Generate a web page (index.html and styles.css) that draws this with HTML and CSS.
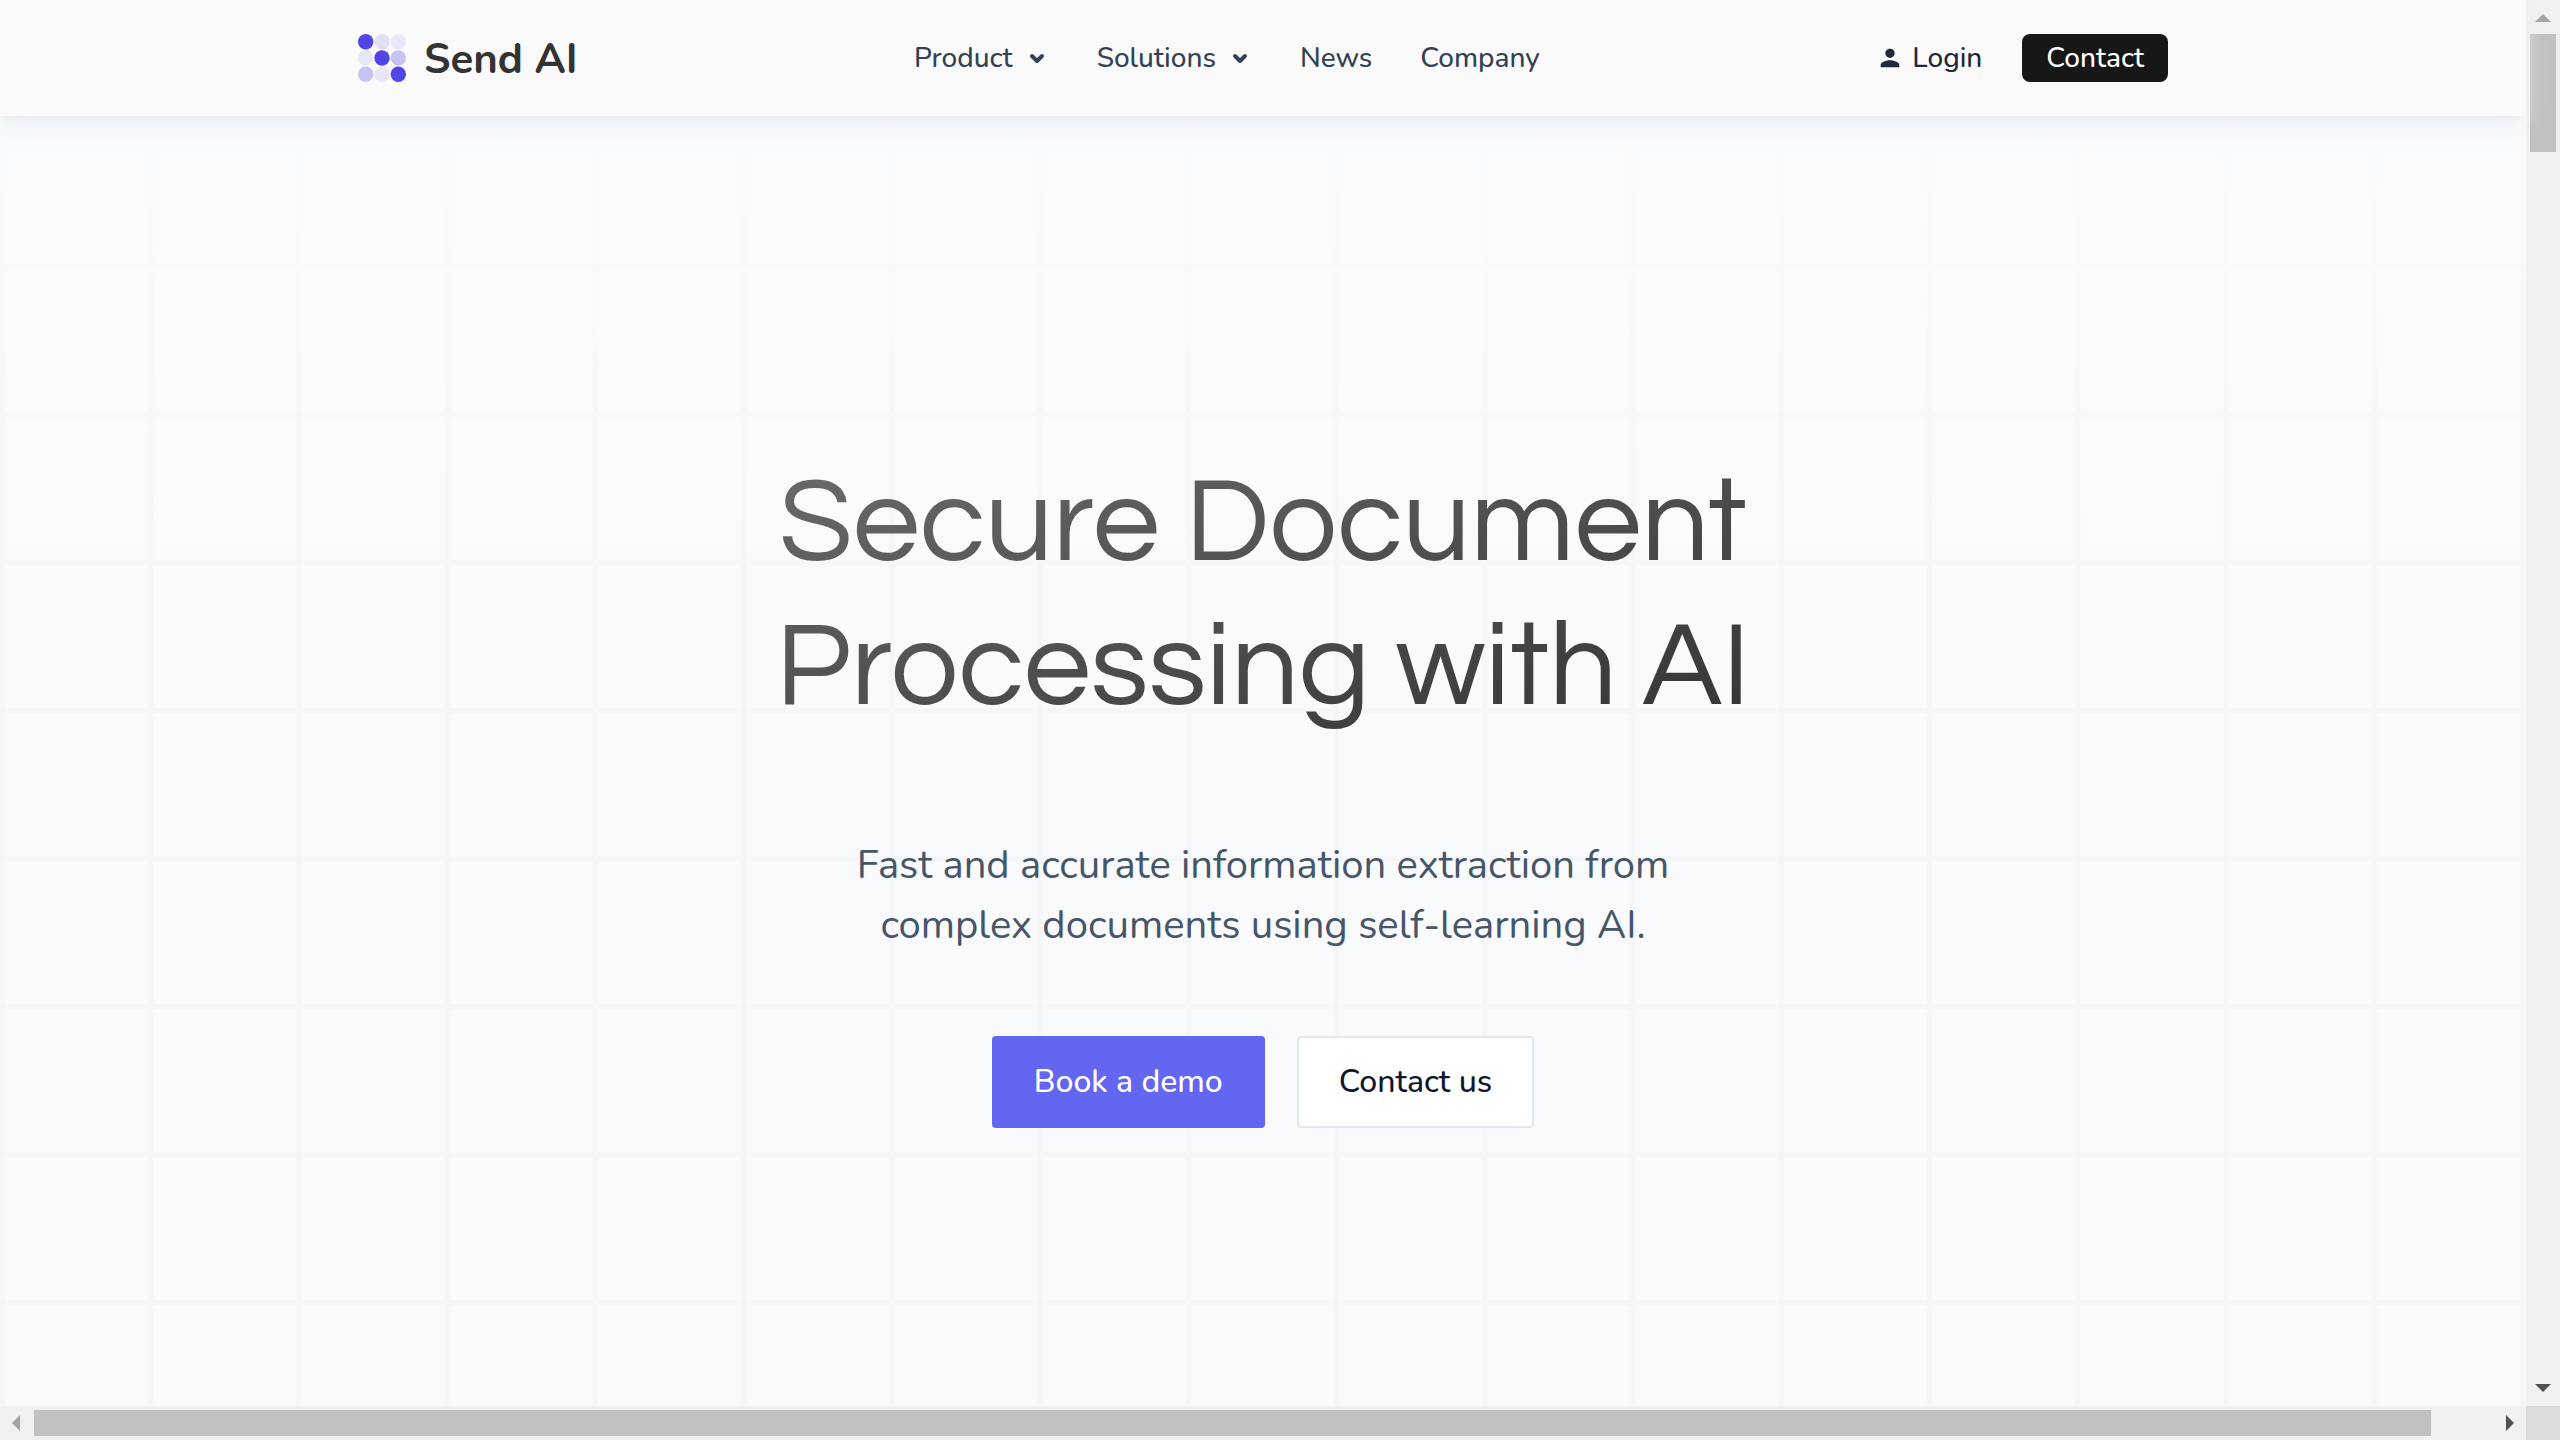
FILE: index.html
```html
<!DOCTYPE html>
<html lang="en">
<head>
  <meta charset="utf-8">
  <meta name="viewport" content="width=device-width, initial-scale=1">
  <title>Send AI</title>
  <link rel="stylesheet" href="styles.css">
</head>
<body>
  <div class="frame">
    <div class="page">
      <header class="header">
        <div class="header-inner">
          <a class="brand" href="#">
            <svg class="brand-mark" viewBox="0 0 48 48" aria-hidden="true">
              <g fill="#4f46e5"><circle cx="7.7" cy="7.7" r="7.7"/><circle cx="24" cy="24" r="7.7"/><circle cx="40.3" cy="40.3" r="7.7"/></g>
              <g fill="#c7c4f3"><circle cx="40.3" cy="24" r="7.7"/><circle cx="7.7" cy="40.3" r="7.7"/></g>
              <g fill="#e8e7f8"><circle cx="40.3" cy="7.7" r="7.7"/><circle cx="7.7" cy="24" r="7.7"/><circle cx="24" cy="40.3" r="7.7"/></g>
              <circle cx="24" cy="7.7" r="7.7" fill="#e1dff6"/>
            </svg>
            <span class="brand-name">Send AI</span>
          </a>
          <nav class="nav">
            <button class="nav-item" type="button">Product
              <svg class="chevron" viewBox="0 0 24 24" aria-hidden="true"><path d="M7 10l5 5 5-5"/></svg>
            </button>
            <button class="nav-item" type="button">Solutions
              <svg class="chevron" viewBox="0 0 24 24" aria-hidden="true"><path d="M7 10l5 5 5-5"/></svg>
            </button>
            <a class="nav-item" href="#">News</a>
            <a class="nav-item" href="#">Company</a>
          </nav>
          <div class="actions">
            <a class="login" href="#">
              <svg class="person" viewBox="0 0 24 24" aria-hidden="true"><path d="M12 12c2.21 0 4-1.79 4-4s-1.790-4-4-4-4 1.790-4 4 1.790 4 4 4zm0 2c-2.670 0-8 1.340-8 4v2h16v-2c0-2.660-5.330-4-8-4z"/></svg>
              Login
            </a>
            <a class="contact" href="#">Contact</a>
          </div>
        </div>
      </header>
      <main class="hero">
        <h1 class="title">Secure Document<br>Processing with AI</h1>
        <p class="lead">Fast and accurate information extraction from<br>complex documents using self-learning AI.</p>
        <div class="cta">
          <a class="button button-primary" href="#">Book a demo</a>
          <a class="button button-plain" href="#">Contact us</a>
        </div>
      </main>
    </div>
    <div class="bar bar-vertical" aria-hidden="true">
      <svg class="arrow arrow-off" viewBox="0 0 34 34"><path d="M9 22l8-8 8 8z"/></svg>
      <div class="track"><div class="thumb"></div></div>
      <svg class="arrow" viewBox="0 0 34 34"><path d="M9 12h16l-8 8z"/></svg>
    </div>
    <div class="bar bar-horizontal" aria-hidden="true">
      <svg class="arrow arrow-off" viewBox="0 0 34 34"><path d="M20 9v16l-8-8z"/></svg>
      <div class="track"><div class="thumb"></div></div>
      <svg class="arrow" viewBox="0 0 34 34"><path d="M14 9v16l8-8z"/></svg>
    </div>
    <div class="corner"></div>
  </div>
</body>
</html>
```
FILE: styles.css
```css
* {
  box-sizing: border-box;
}

body {
  margin: 0;
  background: #f8fafc;
  color: #334155;
  font-family: Nunito, "Noto Sans", sans-serif;
  font-size: 28px;
  line-height: 40px;
}

a {
  color: inherit;
  text-decoration: none;
}

.frame {
  display: grid;
  grid-template-columns: 1fr 34px;
  grid-template-rows: 1fr 34px;
  min-height: 100vh;
}

.page {
  display: flex;
  flex-direction: column;
  min-width: 0;
}

/* Header */

.header {
  position: relative;
  padding: 34px 32px;
  background: #fafafa;
  box-shadow: 0 8px 24px -4px #e8ecf0, 0 4px 8px -2px #ebeef1;
  font-weight: 500;
}

.header-inner {
  display: flex;
  align-items: center;
  justify-content: space-between;
  max-width: 1810px;
  margin: 0 auto;
}

.brand {
  display: flex;
  align-items: flex-end;
  gap: 18px;
  color: #333;
}

.brand-mark {
  width: 48px;
  height: 48px;
}

.brand-name {
  font-size: 42px;
  font-weight: 700;
  line-height: 44px;
}

.nav {
  display: flex;
  align-items: center;
  gap: 48px;
}

.nav-item {
  display: flex;
  align-items: center;
  gap: 12px;
  padding: 0;
  border: 0;
  background: none;
  color: inherit;
  font: inherit;
}

.chevron {
  width: 24px;
  height: 24px;
  fill: none;
  stroke: currentColor;
  stroke-width: 4;
  stroke-linecap: round;
  stroke-linejoin: round;
}

.actions {
  display: flex;
  align-items: center;
  gap: 40px;
}

.login {
  display: flex;
  align-items: center;
  gap: 8px;
  color: #1e293b;
}

.person {
  width: 28px;
  height: 28px;
  fill: currentColor;
}

.contact {
  padding: 4px 24px;
  border-radius: 8px;
  background: #171717;
  color: #fff;
}

/* Hero */

.hero {
  display: flex;
  flex: 1;
  flex-direction: column;
  align-items: center;
  padding: 336px 32px 160px;
  background-image:
    linear-gradient(#f8fbfd, #f8fbfd00 480px),
    linear-gradient(90deg, #f4f6f7 5px, transparent 5px),
    linear-gradient(#f4f6f7 5px, transparent 5px);
  background-size: 100% 100%, calc((100% - 6px) / 17) 148px, 148px 148px;
  background-color: #f9fafc;
  text-align: center;
}

.title {
  margin: 0;
  background: linear-gradient(to bottom right, #6b6b6b, #333);
  background-clip: text;
  -webkit-background-clip: text;
  color: transparent;
  font-family: Questrial, Inter, sans-serif;
  font-size: 120px;
  font-weight: 400;
  line-height: 144px;
}

.lead {
  margin: 95px 0 81px;
  color: #475569;
  font-size: 40px;
  line-height: 60px;
}

.cta {
  display: flex;
  gap: 32px;
}

.button {
  padding: 24px 40px;
  border: 2px solid;
  border-radius: 4px;
  font-size: 32px;
  line-height: 40px;
}

.button-primary {
  border-color: #6366f1;
  background: #6366f1;
  color: #fff;
  font-weight: 500;
}

.button-plain {
  border-color: #e2e8f0;
  background: #fff;
  color: #0f172a;
  font-weight: 500;
}

/* Window scroll bars */

.bar {
  display: flex;
  background: #f0f0f0;
}

.bar-vertical {
  flex-direction: column;
}

.track {
  flex: 1;
}

.thumb {
  background: #c1c1c1;
}

.bar-vertical .thumb {
  height: 118px;
  margin: 0 4px;
}

.bar-horizontal .track {
  padding: 4px 0;
}

.bar-horizontal .thumb {
  width: 97.5%;
  height: 26px;
}

.arrow {
  width: 34px;
  height: 34px;
  fill: #505050;
}

.arrow-off {
  fill: #a3a3a3;
}

.corner {
  background: #dcdcdc;
}
```
